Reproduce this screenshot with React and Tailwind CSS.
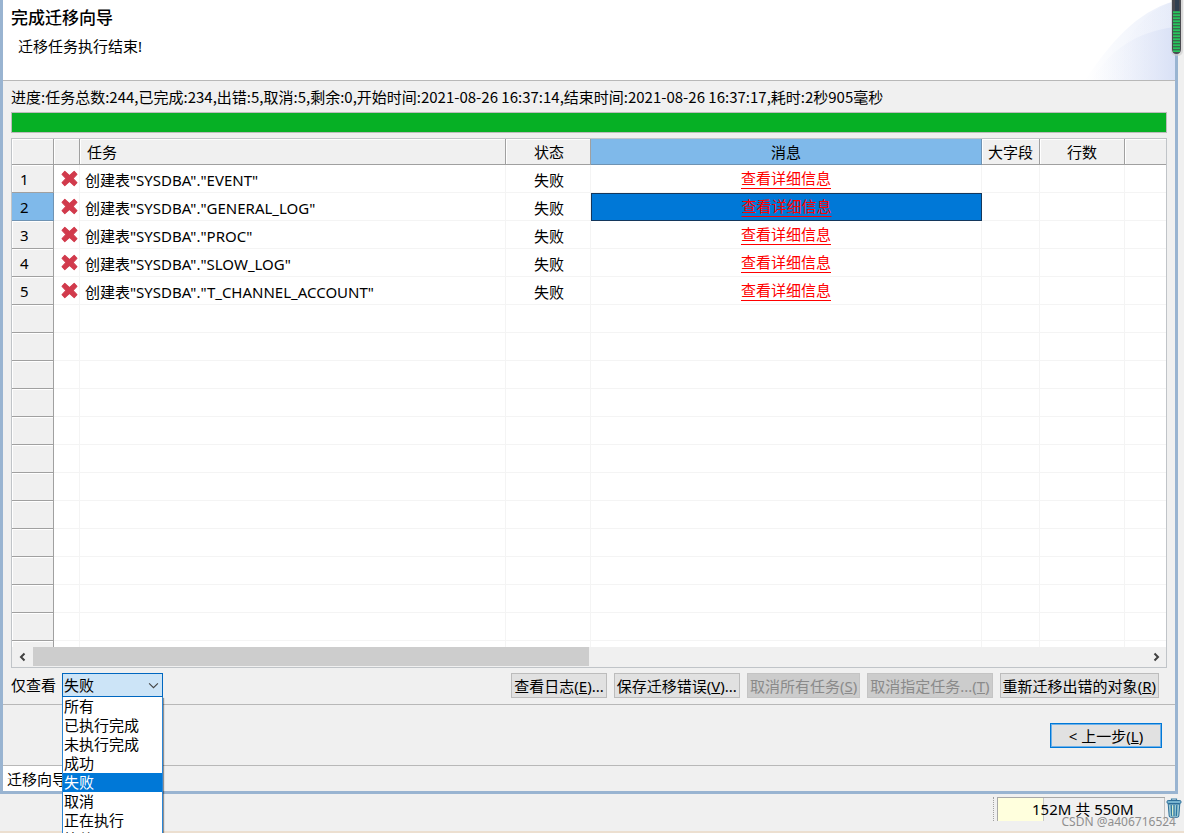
import { useState } from "react";

const TASKS = ["EVENT", "GENERAL_LOG", "PROC", "SLOW_LOG", "T_CHANNEL_ACCOUNT"];
const EMPTY_ROWS = Array.from({ length: 13 }, (_, i) => i);
const FILTERS = ["所有", "已执行完成", "未执行完成", "成功", "失败", "取消", "正在执行", "等待"];
const GAUGE_TICKS = Array.from({ length: 14 }, (_, i) => 12 + i * 3);

function FailIcon() {
  return (
    <svg viewBox="0 0 16 16" className="ml-[7px] block size-[17px]" aria-hidden="true">
      <path
        d="M3.600 1.200 8 5.200l4.400-4 2.600 2.900-3.600 3.900 3.600 3.900-2.600 2.900L8 10.800l-4.400 4L1 11.900 4.600 8 1 4.100z"
        fill="#d13a4c"
        stroke="#d13a4c"
        strokeWidth="1"
        strokeLinejoin="round"
      />
    </svg>
  );
}

function HeaderCurves() {
  return (
    <svg viewBox="0 0 90 80" className="block h-20 w-[90px]" aria-hidden="true">
      <defs>
        <linearGradient id="curveA" x1="0" x2="1">
          <stop offset="0" stopColor="#ffffff" />
          <stop offset="1" stopColor="#e9eefa" />
        </linearGradient>
        <linearGradient id="curveB" x1="0" x2="1">
          <stop offset="0" stopColor="#f4f6fc" stopOpacity="0" />
          <stop offset="1" stopColor="#d9e1f6" />
        </linearGradient>
      </defs>
      <path d="M0 80C24 45 50 12 90 1v79z" fill="url(#curveA)" />
      <path d="M40 45C53 22 68 8 90 1v79H20z" fill="url(#curveB)" opacity="0.25" />
      <path d="M6 80C26 50 50 32 90 27v53z" fill="url(#curveB)" />
    </svg>
  );
}

function Gauge() {
  return (
    <svg viewBox="0 0 12 58" className="absolute right-px top-0 h-[58px] w-3" aria-hidden="true">
      <path d="M0 0h12v50q0 6-6 6t-6-6z" fill="#c9c9c9" opacity="0.6" />
      <path d="M1 0h9v49q0 5-4.500 5T1 49z" fill="#4a4a50" />
      <path d="M4 0h4v11H4z" fill="#303f50" />
      <path d="M2 11h7v38q0 3-3.500 3T2 49z" fill="#3a6b4c" />
      {GAUGE_TICKS.map((y) => (
        <rect key={y} x="2" y={y - 0.5} width="7" height="1.3" fill="#22dd62" />
      ))}
    </svg>
  );
}

function TrashIcon() {
  return (
    <svg viewBox="0 0 16 20" className="block h-5 w-4" aria-hidden="true">
      <path d="M5.500 2.500V1h5v1.500" fill="none" stroke="#3b7fa6" strokeWidth="1.2" />
      <rect x="1" y="2.500" width="14" height="3" rx="1.2" fill="#78b4d0" stroke="#2d6f99" />
      <path d="M2.200 6h11.600l-1 12q-.1 1.300-1.500 1.300H4.700q-1.400 0-1.500-1.300z" fill="#9fcbd6" stroke="#2d6f99" />
      <path d="M5.200 7l.5 11M8 7v11M10.800 7l-.5 11" stroke="#2d78a0" strokeWidth="1.3" />
      <path d="M6.600 7.500v10" stroke="#e3f2c8" strokeWidth="1" />
    </svg>
  );
}

function Chevron({ className, d }) {
  return (
    <svg viewBox="0 0 10 10" className={className} fill="none" aria-hidden="true">
      <path d={d} stroke="currentColor" />
    </svg>
  );
}

function ToolButton({ label, hotkey, tail = "", disabled = false }) {
  return (
    <button
      type="button"
      disabled={disabled}
      className="h-[25px] whitespace-nowrap border border-[#bcbcbc] bg-[#e1e1e1] px-0.5 leading-5 disabled:border-[#c4c4c4] disabled:bg-[#cccccc] disabled:text-[#8a8a8a]"
    >
      {label}(<span className="underline">{hotkey}</span>){tail}
    </button>
  );
}

const HEAD = "border-r border-b border-[#a0a0a0] bg-[#f0f0f0] p-0 font-normal shadow-[inset_1px_1px_0_#ffffff]";
const CELL = "border-r border-b border-[#f4f4f4] p-0";
const ROW_HEAD = "border-r border-b border-[#a0a0a0] bg-[#f0f0f0] p-0 pl-2 text-left font-normal shadow-[inset_1px_1px_0_#ffffff]";
const ROW_HEAD_ON = "border-r border-b border-[#6f93b3] bg-[#7fb9ea] p-0 pl-2 text-left font-normal";

function TaskTable() {
  const selected = 1;
  return (
    <table className="w-full table-fixed border-separate border-spacing-0">
      <colgroup>
        <col className="w-[42px]" />
        <col className="w-[26px]" />
        <col className="w-[426px]" />
        <col className="w-[85px]" />
        <col className="w-[391px]" />
        <col className="w-[58px]" />
        <col className="w-[85px]" />
        <col />
      </colgroup>
      <thead>
        <tr className="h-[26px]">
          <th className={HEAD} />
          <th className={HEAD} />
          <th className={`${HEAD} text-left`}><span className="pl-[7px]">任务</span></th>
          <th className={HEAD}><span className="pl-0.5">状态</span></th>
          <th className="border-r border-b border-[#6f93b3] bg-[#7fb9ea] p-0 font-normal">消息</th>
          <th className={HEAD}>大字段</th>
          <th className={HEAD}>行数</th>
          <th className="border-b border-[#a0a0a0] bg-[#f0f0f0] p-0 shadow-[inset_1px_1px_0_#ffffff]" />
        </tr>
      </thead>
      <tbody>
        {TASKS.map((name, i) => (
          <tr key={name} className="h-7">
            <th scope="row" className={i === selected ? ROW_HEAD_ON : ROW_HEAD}>{i + 1}</th>
            <td className={CELL}><FailIcon /></td>
            <td className={`${CELL} whitespace-nowrap pt-0.5`}>
              <span className="pl-[5px]">创建表"SYSDBA"."{name}"</span>
            </td>
            <td className={`${CELL} pt-0.5 text-center`}><span className="pl-0.5">失败</span></td>
            <td
              className={
                i === selected
                  ? "border border-[#14375c] bg-[#0078d7] p-0 text-center"
                  : `${CELL} text-center`
              }
            >
              <a href="#detail" className="block pb-0.5 leading-5 text-[#ff0000] underline underline-offset-4">查看详细信息</a>
            </td>
            <td className={CELL} />
            <td className={CELL} />
            <td className="border-b border-[#f4f4f4] p-0" />
          </tr>
        ))}
        {EMPTY_ROWS.map((n) => (
          <tr key={n} className="h-7">
            <td className={ROW_HEAD} />
            <td className={CELL} />
            <td className={CELL} />
            <td className={CELL} />
            <td className={CELL} />
            <td className={CELL} />
            <td className={CELL} />
            <td className="border-b border-[#f4f4f4] p-0" />
          </tr>
        ))}
      </tbody>
    </table>
  );
}

function FilterBox() {
  const [value, setValue] = useState("失败");
  return (
    <div className="relative w-[101px]">
      <select
        id="filter"
        value={value}
        onChange={(e) => setValue(e.target.value)}
        className="block h-6 w-full appearance-none border border-[#0067c0] bg-[#cce4f7] pl-px leading-5 outline-none"
      >
        {FILTERS.map((f) => (
          <option key={f}>{f}</option>
        ))}
      </select>
      <Chevron className="pointer-events-none absolute right-1 top-[7px] size-[11px] text-[#444444]" d="M1 3l4 4 4-4" />
      <ul className="absolute left-0 top-6 z-10 w-full border border-t-0 border-[#2b86d6] bg-white shadow-[1px_1px_1px_rgba(0,0,0,0.4)]">
        {FILTERS.map((f) => (
          <li key={f}>
            <button
              type="button"
              onClick={() => setValue(f)}
              className={
                f === value
                  ? "block h-[19px] w-full bg-[#0078d7] pl-px text-left leading-[19px] text-white"
                  : "block h-[19px] w-full pl-px text-left leading-[19px]"
              }
            >
              {f}
            </button>
          </li>
        ))}
      </ul>
    </div>
  );
}

export default function App() {
  return (
    <div className="relative flex h-screen flex-col overflow-hidden bg-[#f0f0f0] font-['Noto_Sans','Noto_Sans_CJK_SC',sans-serif] text-[15px] leading-5 text-black">
      <main className="mr-1.5 flex min-h-0 flex-1 flex-col border-x-[3px] border-b-[3px] border-[#99b4d1]">
        <header className="flex h-[81px] shrink-0 justify-between border-b border-[#b8b8b8] bg-white">
          <div className="pl-2 pt-2">
            <h1 className="text-[17px] font-medium leading-5">完成迁移向导</h1>
            <p className="pl-[7px] pt-2">迁移任务执行结束!</p>
          </div>
          <HeaderCurves />
        </header>

        <section className="flex min-h-0 flex-1 flex-col px-2">
          <p className="whitespace-nowrap pb-[5px] pt-[6px] font-['Noto_Sans_CJK_SC',sans-serif] leading-5">
            进度:任务总数:244,已完成:234,出错:5,取消:5,剩余:0,开始时间:2021-08-26 16:37:14,结束时间:2021-08-26 16:37:17,耗时:2秒905毫秒
          </p>
          <div role="progressbar" aria-valuenow={100} aria-label="进度" className="h-[21px] shrink-0 border border-[#bcbcbc] bg-[#06b025]" />
          <div className="mt-[5px] flex min-h-0 flex-1 flex-col border border-[#c0c4c8]">
            <div className="min-h-0 flex-1 overflow-hidden bg-white">
              <TaskTable />
            </div>
            <div className="flex h-5 shrink-0 items-center text-[#404040]">
              <button type="button" aria-label="向左滚动" className="flex h-5 w-[21px] items-center justify-center">
                <Chevron className="size-[10px] stroke-2" d="M6.500 1.500L3 5l3.500 3.500" />
              </button>
              <div className="h-5 flex-1">
                <div className="h-[19px] w-[50%] bg-[#cdcdcd]" />
              </div>
              <button type="button" aria-label="向右滚动" className="flex h-5 w-[21px] items-center justify-center">
                <Chevron className="size-[10px] stroke-2" d="M3.500 1.500L7 5l-3.500 3.500" />
              </button>
            </div>
          </div>
        </section>

        <div className="flex h-[37px] shrink-0 items-start justify-between border-b border-[#b8b8b8] pl-2 pr-4 pt-[5px]">
          <div className="flex items-start gap-[6px]">
            <label htmlFor="filter" className="pt-[2px]">仅查看</label>
            <FilterBox />
          </div>
          <div className="flex gap-[7px]">
            <ToolButton label="查看日志" hotkey="E" tail="..." />
            <ToolButton label="保存迁移错误" hotkey="V" tail="..." />
            <ToolButton label="取消所有任务" hotkey="S" disabled />
            <ToolButton label="取消指定任务..." hotkey="T" disabled />
            <ToolButton label="重新迁移出错的对象" hotkey="R" />
          </div>
        </div>

        <div className="flex h-[61px] shrink-0 items-start justify-end border-b border-[#b8b8b8] pr-[13px] pt-[18px]">
          <button type="button" className="h-[25px] w-28 border border-[#0078d7] bg-[#e1e1e1] leading-5 shadow-[inset_0_0_0_1px_#6fb1e8]">
            &lt; 上一步(<span className="underline">L</span>)
          </button>
        </div>

        <div className="flex h-[25px] shrink-0">
          <button type="button" className="bg-white pl-1 pr-2 leading-5">迁移向导</button>
        </div>
      </main>

      <footer className="flex h-[39px] shrink-0 items-start justify-end border-b-2 border-[#ecdfd0] pr-0.5 pt-[3px]">
        <div className="mr-[3px] h-6 border-l border-dotted border-[#a0a0a0]" />
        <div className="flex h-6 w-[168px] border-l border-t border-[#a8a8a8]">
          <div className="w-[46px] border-r border-[#c8c8c8] bg-[#ffffdd]" />
          <div className="flex-1 border-r border-[#c0c0c0]">
            <span className="-ml-3 block whitespace-nowrap leading-[22px]">152M 共 550M</span>
          </div>
        </div>
        <button type="button" aria-label="回收内存" className="ml-px pt-px"><TrashIcon /></button>
      </footer>

      <Gauge />
      <p className="absolute bottom-[3px] right-2 text-[12px] leading-4 text-[#8f8f8f]">CSDN @a406716524</p>
    </div>
  );
}
